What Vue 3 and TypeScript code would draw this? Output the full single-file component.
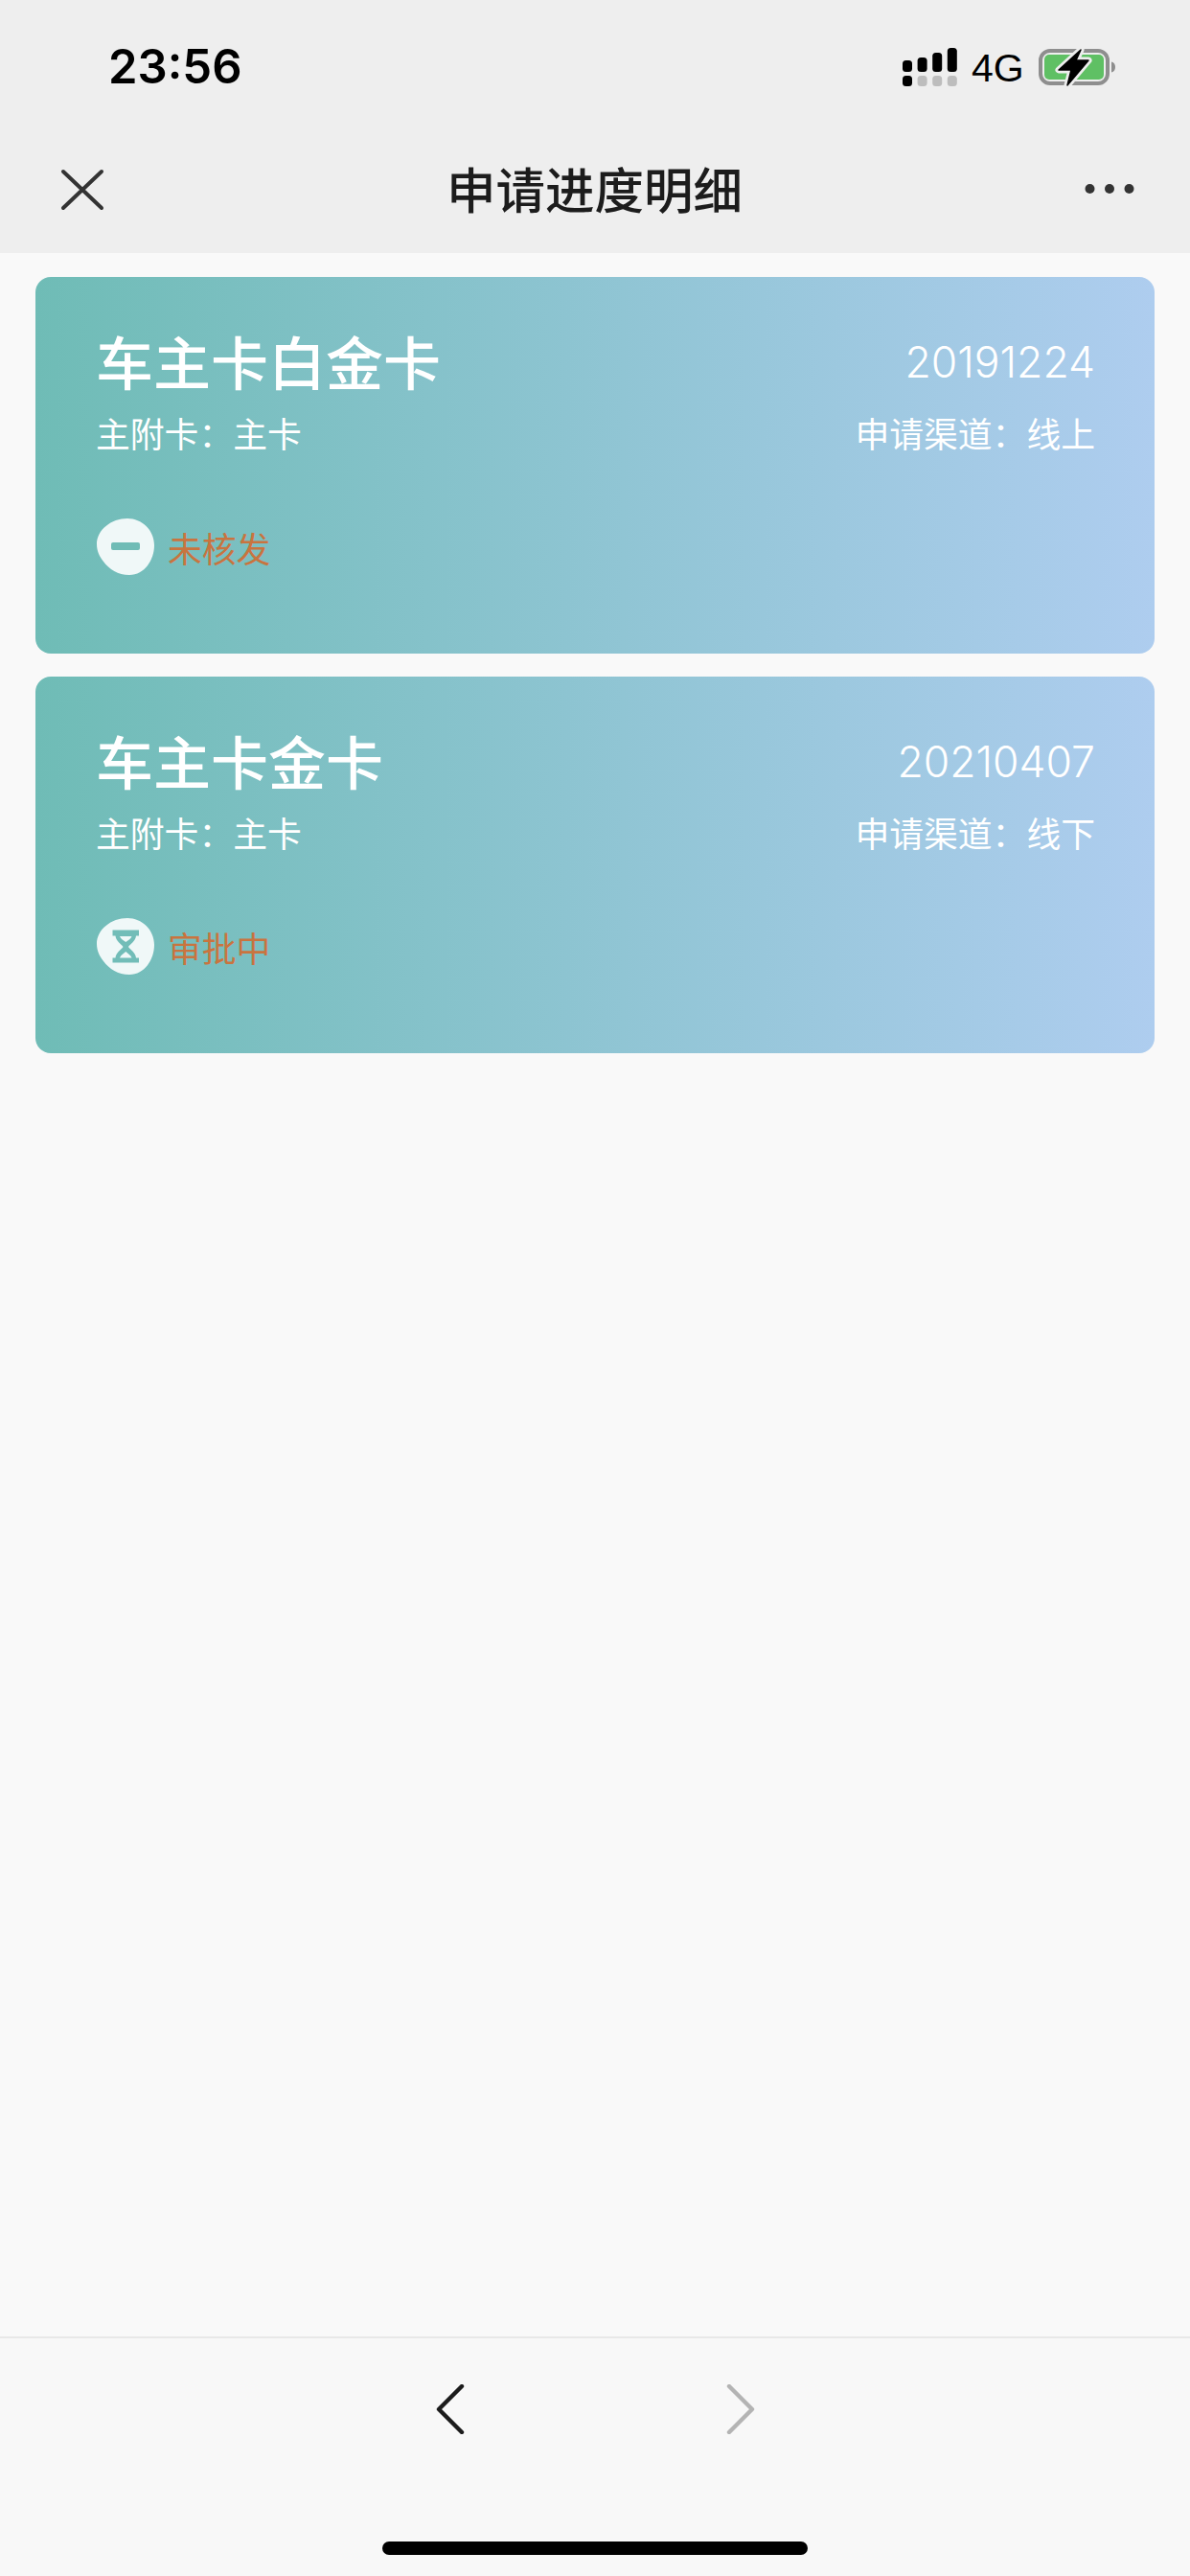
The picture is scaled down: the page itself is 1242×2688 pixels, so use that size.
<script setup lang="ts">
interface Card {
  name: string
  date: string
  kind: string
  channel: string
  status: string
  icon: 'minus' | 'hourglass'
}
const cards: Card[] = [
  { name: '车主卡白金卡', date: '20191224', kind: '主附卡：主卡', channel: '申请渠道：线上', status: '未核发', icon: 'minus' },
  { name: '车主卡金卡', date: '20210407', kind: '主附卡：主卡', channel: '申请渠道：线下', status: '审批中', icon: 'hourglass' },
]
const blob = 'M32 0C47 0 60 12 60 28C60 43 50 59 34 59C22 59 13 53 7 45C3 40 0 34 0 27C0 12 15 0 32 0Z'
</script>

<template>
  <div class="page">
    <header class="head">
      <div class="status">
        <span class="time">23:56</span>
        <div class="status-right">
          <svg class="signal" width="57" height="42" viewBox="0 0 57 42">
            <g fill="#000">
              <rect x="0" y="13" width="10" height="12" rx="3.500" />
              <rect x="15.600" y="10" width="10" height="15" rx="3.500" />
              <rect x="31.200" y="5" width="10" height="20" rx="3.500" />
              <rect x="46.800" y="0" width="10" height="25" rx="3.500" />
              <rect x="0" y="29" width="10" height="11" rx="3.500" />
            </g>
            <g fill="#bdbdbd">
              <rect x="15.600" y="29" width="10" height="11" rx="3.500" />
              <rect x="31.200" y="29" width="10" height="11" rx="3.500" />
              <rect x="46.800" y="29" width="10" height="11" rx="3.500" />
            </g>
          </svg>
          <span class="net">4G</span>
          <svg class="battery" width="82" height="42" viewBox="0 0 82 42">
            <rect x="2" y="3" width="70" height="34" rx="10" fill="none" stroke="#8e8e8e" stroke-width="4" />
            <rect x="6" y="7" width="62" height="26" rx="5" fill="#5fc064" />
            <path d="M76 14.500C79 15 80 17.500 80 20C80 22.500 79 25 76 25.500Z" fill="#8e8e8e" />
            <path d="M44 2L21 23H34L30 39L52 13H39Z" fill="#000" stroke="#eeeeee" stroke-width="7" stroke-linejoin="round" />
            <path d="M44 2L21 23H34L30 39L52 13H39Z" fill="#000" stroke="#000" stroke-width="1.500" stroke-linejoin="round" />
          </svg>
        </div>
      </div>
      <nav class="nav">
        <svg class="nav-close" width="46" height="44" viewBox="0 0 46 44">
          <path d="M3 3L43 41M43 3L3 41" fill="none" stroke="#333" stroke-width="4" stroke-linecap="round" />
        </svg>
        <h1 class="nav-title">申请进度明细</h1>
        <svg class="nav-more" width="52" height="12" viewBox="0 0 52 12">
          <g fill="#333"><circle cx="5.500" cy="6" r="5" /><circle cx="26" cy="6" r="5" /><circle cx="46.500" cy="6" r="5" /></g>
        </svg>
      </nav>
    </header>

    <main class="list">
      <article v-for="card in cards" :key="card.date" class="card">
        <div class="row">
          <h2 class="name">{{ card.name }}</h2>
          <span class="date">{{ card.date }}</span>
        </div>
        <div class="row sub">
          <span>{{ card.kind }}</span>
          <span>{{ card.channel }}</span>
        </div>
        <div class="state">
          <svg width="60" height="60" viewBox="0 0 60 60">
            <path :d="blob" fill="#f0f8f8" />
            <rect v-if="card.icon === 'minus'" x="15" y="25" width="30" height="8" rx="2" fill="#6fbcb6" />
            <g v-else>
              <path d="M16.500 12.500H44V18.500H41C40.500 24 35 27 33 30C35 33 40.500 36 41 41.500H44V46.500H16.500V41.500H19.500C20 36 25.500 33 27.500 30C25.500 27 20 24 19.500 18.500H16.500Z" fill="#72bdb8" />
              <path d="M24 19H36.500C35.500 22 32.500 23 30.300 25C28 23 25 22 24 19Z" fill="#f0f8f8" />
              <path d="M24 41.500H36.500C35.500 38.500 32.500 37 30.300 35C28 37 25 38.500 24 41.500Z" fill="#f0f8f8" />
            </g>
          </svg>
          <span class="state-text">{{ card.status }}</span>
        </div>
      </article>
    </main>

    <footer class="foot">
      <div class="arrows">
        <svg width="30" height="52" viewBox="0 0 30 52">
          <path d="M27 2L3 26L27 50" fill="none" stroke="#1c1c1c" stroke-width="4.400" stroke-linecap="round" stroke-linejoin="round" />
        </svg>
        <svg width="30" height="52" viewBox="0 0 30 52">
          <path d="M3 2L27 26L3 50" fill="none" stroke="#b4b4b4" stroke-width="4.400" stroke-linecap="round" stroke-linejoin="round" />
        </svg>
      </div>
      <div class="home"></div>
    </footer>
  </div>
</template>

<style scoped>
.page {
  width: 1242px;
  height: 2688px;
  display: flex;
  flex-direction: column;
  background: #f9f9f9;
  font-family: "Noto Sans CJK SC", "Liberation Sans", sans-serif;
  overflow: hidden;
}
.head {
  height: 264px;
  background: #eeeeee;
  display: flex;
  flex-direction: column;
  flex: none;
}
.status {
  height: 140px;
  padding: 0 76px 0 113px;
  display: flex;
  align-items: flex-start;
  justify-content: space-between;
}
.time {
  margin-top: 40px;
  font-family: Inter, "Liberation Sans", sans-serif;
  font-size: 49px;
  line-height: 60px;
  font-weight: 600;
  color: #000;
}
.status-right {
  margin-top: 50px;
  display: flex;
  align-items: flex-start;
}
.signal { display: block; }
.net {
  margin-left: 15px;
  margin-top: -1px;
  width: 70px;
  font-family: "Liberation Sans", sans-serif;
  font-size: 41px;
  line-height: 44px;
  color: #000;
}
.battery { display: block; }
.nav {
  height: 124px;
  padding: 0 58px 0 63px;
  display: flex;
  align-items: center;
  justify-content: space-between;
}
.nav-close { display: block; margin-top: -8px; }
.nav-more { display: block; margin-top: -10px; }
.nav-title {
  flex: 1;
  margin: -13px 0 0;
  text-align: center;
  font-size: 51.500px;
  line-height: 70px;
  font-weight: 500;
  color: #1c1c1c;
}
.list {
  flex: 1;
  padding: 25px 37px 0;
  display: flex;
  flex-direction: column;
  gap: 24px;
}
.card {
  height: 393px;
  box-sizing: border-box;
  padding: 47px 62px 0 63px;
  border-radius: 16px;
  background: linear-gradient(to right, #6fbcb6, #aecdef);
  color: #fff;
}
.row {
  display: flex;
  justify-content: space-between;
  align-items: center;
}
.name {
  margin: 0;
  font-size: 60px;
  line-height: 80px;
  font-weight: 500;
}
.date {
  padding-top: 4px;
  font-family: Inter, "Liberation Sans", sans-serif;
  font-size: 44.500px;
  line-height: 76px;
  font-weight: 300;
}
.sub {
  margin-top: 10px;
  font-size: 35.800px;
  line-height: 50px;
  font-weight: 400;
}
.state {
  margin-top: 65px;
  display: flex;
  align-items: center;
  gap: 14px;
}
.state svg { display: block; flex: none; margin-left: 1px; }
.state-text {
  font-size: 35.800px;
  line-height: 60px;
  font-weight: 400;
  color: #c9743f;
}
.foot {
  height: 250px;
  flex: none;
  box-sizing: border-box;
  border-top: 2px solid #e8e8e8;
  background: #f8f8f8;
  display: flex;
  flex-direction: column;
  align-items: center;
  padding-top: 48px;
}
.arrows {
  display: flex;
  gap: 273px;
}
.arrows svg { display: block; }
.home {
  margin-top: 112px;
  width: 444px;
  height: 14px;
  border-radius: 7px;
  background: #000;
}
</style>
